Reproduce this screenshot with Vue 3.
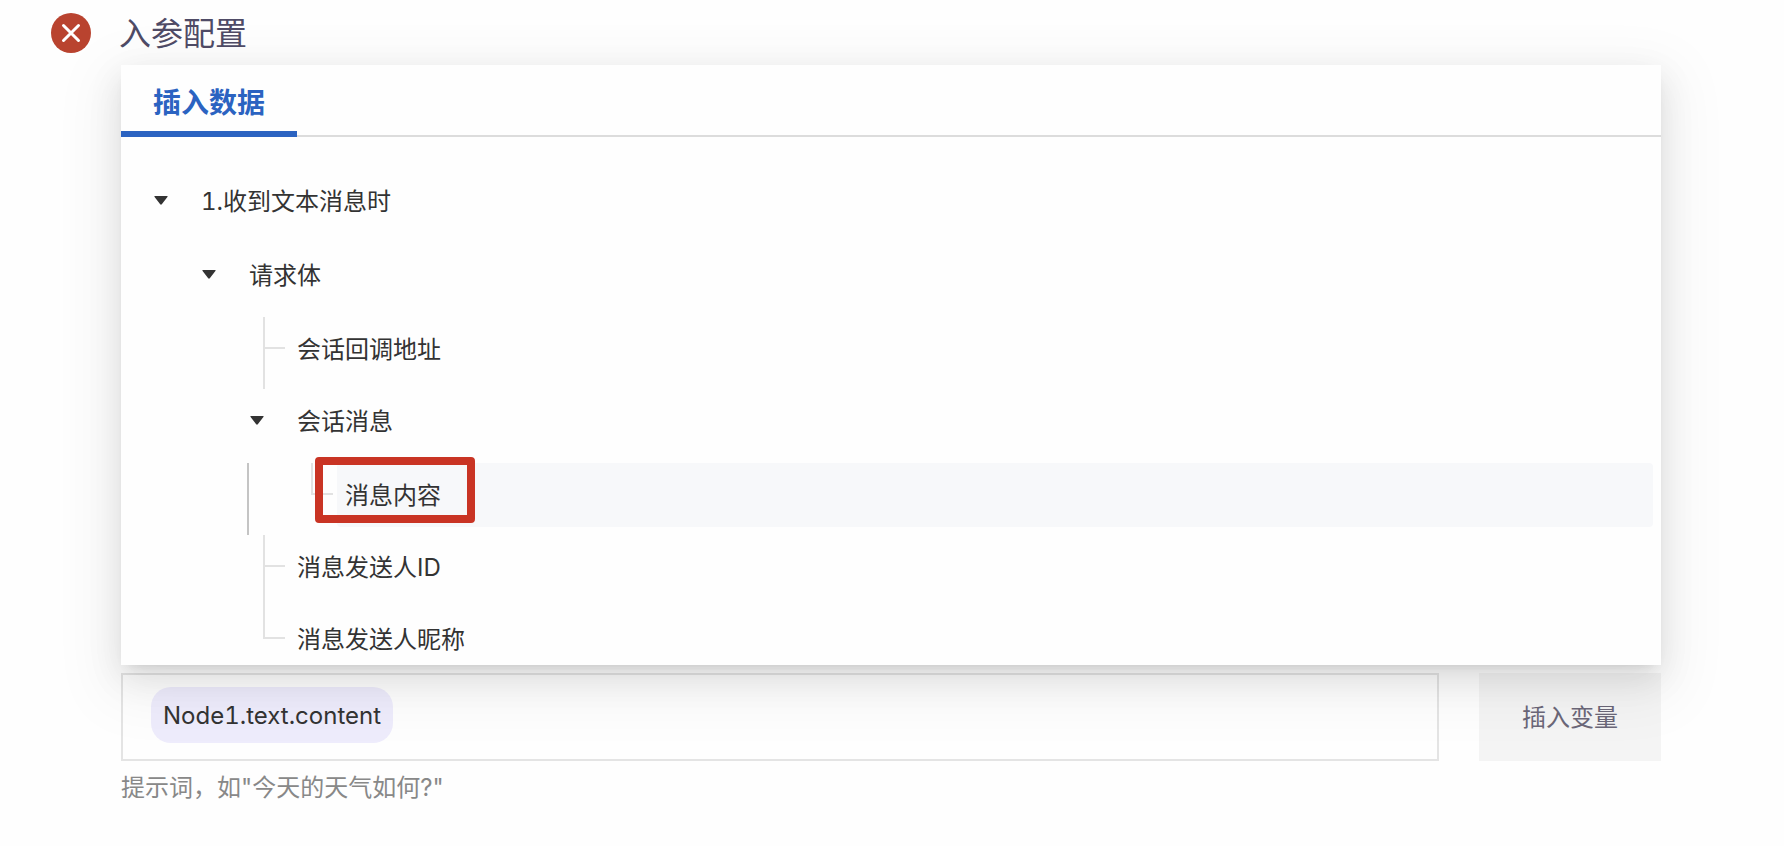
<script setup>
import { ref } from 'vue'

const query = ref('')
const nodes = [
  { label: '1.收到文本消息时', level: 1, branch: true },
  { label: '请求体', level: 2, branch: true },
  { label: '会话回调地址', level: 3 },
  { label: '会话消息', level: 3, branch: true },
  { label: '消息内容', level: 4, last: true, active: true },
  { label: '消息发送人ID', level: 3 },
  { label: '消息发送人昵称', level: 3, last: true },
]
</script>

<template>
  <main class="page">
    <header class="heading">
      <span class="status" role="img" aria-label="错误">
        <svg viewBox="0 0 40 40" width="40" height="40" aria-hidden="true">
          <circle cx="20" cy="20" r="20" fill="#b9432f" />
          <path d="M12.500 12.500 27.500 27.500M27.500 12.500 12.500 27.500" stroke="#fff" stroke-width="3" stroke-linecap="round" />
        </svg>
      </span>
      <h1 class="title">入参配置</h1>
    </header>

    <section class="content">
      <div class="panel">
        <div class="tabs" role="tablist">
          <button class="tab" type="button" role="tab" aria-selected="true">插入数据</button>
        </div>
        <ul class="tree" role="tree">
          <li
            v-for="node in nodes"
            :key="node.label"
            class="node"
            :class="['level-' + node.level, { branch: node.branch, leaf: !node.branch, last: node.last, active: node.active }]"
            role="treeitem"
            :aria-level="node.level"
          >
            <button v-if="node.branch" class="caret" type="button" :aria-label="'收起 ' + node.label">
              <svg viewBox="0 0 14 9" width="14" height="9" aria-hidden="true">
                <path d="M1 0H13Q14.200 0 13.400 1L7.800 8.300Q7 9.200 6.200 8.300L.6 1Q-.2 0 1 0Z" fill="#333" />
              </svg>
            </button>
            <span v-else class="connector"></span>
            <span class="label">{{ node.label }}</span>
            <span v-if="node.active" class="marker"></span>
          </li>
        </ul>
      </div>

      <div class="row">
        <div class="field">
          <span class="chip">Node1.text.content</span>
          <input v-model="query" class="input" type="text" aria-label="提示词" aria-describedby="hint" />
        </div>
        <button class="insert" type="button">插入变量</button>
      </div>
      <p id="hint" class="hint">提示词，如"今天的天气如何?"</p>
    </section>
  </main>
</template>

<style>
body {
  margin: 0;
  background: #fefefe;
}
</style>

<style scoped>
.page {
  box-sizing: border-box;
  padding: 9px 123px 32px 51px;
  color: #333;
  font-family: Inter, "Noto Sans CJK SC", sans-serif;
  font-size: 24px;
  font-variant-numeric: tabular-nums;
  line-height: 32px;
}
button,
input {
  margin: 0;
  padding: 0;
  border: 0;
  background: none;
  color: inherit;
  font: inherit;
}
.heading {
  display: flex;
  align-items: center;
  gap: 28px;
  height: 48px;
}
.status {
  display: flex;
}
.title {
  margin: 0;
  padding-top: 2px;
  color: #4f4b66;
  font-size: 32px;
  font-weight: 400;
  line-height: 48px;
}
.content {
  margin: 8px 0 0 70px;
}
.panel {
  position: relative;
  z-index: 1;
  background: #fefefe;
  box-shadow:
    0 6px 12px -8px rgba(0, 0, 0, 0.16),
    0 12px 32px rgba(0, 0, 0, 0.1),
    0 18px 56px 16px rgba(0, 0, 0, 0.05);
}
.tabs {
  display: flex;
  box-shadow: inset 0 -2px #dcdcdc;
}
.tab {
  padding: 18px 32px 8px;
  border-bottom: 6px solid #2b63c1;
  color: #2b63c1;
  font-size: 28px;
  font-weight: 600;
  line-height: 40px;
}
.tree {
  box-sizing: border-box;
  max-height: 528px;
  margin: 0;
  padding: 32px 8px 0 28px;
  overflow: auto;
  scrollbar-width: none;
  list-style: none;
}
.node {
  position: relative;
  display: flex;
  align-items: flex-start;
  height: 72px;
}
.branch {
  height: 74px;
}
.level-2 {
  margin-left: 48px;
}
.level-3 {
  margin-left: 96px;
}
.level-4 {
  margin-left: 144px;
}
.caret {
  display: flex;
  flex: none;
  align-items: center;
  justify-content: center;
  width: 24px;
  height: 62px;
  margin-right: 20px;
}
.connector {
  position: relative;
  flex: none;
  align-self: stretch;
  width: 26px;
  margin-left: 18px;
}
.connector::before {
  content: "";
  position: absolute;
  inset: 0 auto 0 0;
  border-left: 2px solid #e2e2e2;
}
.connector::after {
  content: "";
  position: absolute;
  top: 30px;
  left: 2px;
  width: 20px;
  border-top: 2px solid #e2e2e2;
}
.last .connector::before {
  bottom: auto;
  height: 32px;
}
.label {
  flex: 1;
  padding: 17px 8px 15px;
  border-radius: 4px;
}
.active .label {
  background: #f7f8fa;
}
.active::before {
  content: "";
  position: absolute;
  inset: 0 auto 0 -46px;
  border-left: 2px solid #c4c4c4;
}
.marker {
  position: absolute;
  top: -6px;
  left: 22px;
  box-sizing: border-box;
  width: 160px;
  height: 66px;
  border: 8px solid #c93424;
  border-radius: 4px;
}
.row {
  display: flex;
  gap: 40px;
  margin-top: 8px;
}
.field {
  box-sizing: border-box;
  display: flex;
  flex: 1;
  align-items: flex-start;
  gap: 8px;
  min-width: 0;
  padding: 12px 28px 16px;
  border: 2px solid #e4e4e4;
}
.chip {
  padding: 13px 12px 11px;
  border-radius: 20px;
  background: #eeecfc;
}
.input {
  flex: 1;
  min-width: 0;
  height: 56px;
  outline: none;
}
.insert {
  padding: 2px 43px 0;
  background: #f4f4f4;
  color: #6b6778;
}
.hint {
  margin: 11px 0 0;
  color: #888;
}
</style>
